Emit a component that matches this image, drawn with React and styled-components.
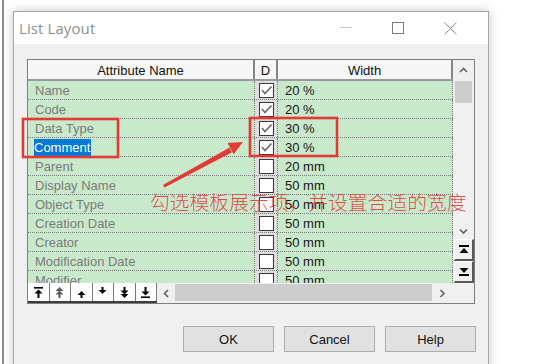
import React from "react";
import styled, { createGlobalStyle } from "styled-components";

const Global = createGlobalStyle`
  html, body { margin: 0; padding: 0; background: #fff; }
  * { box-sizing: border-box; }
`;

const Desktop = styled.div`
  position: relative;
  width: 535px;
  height: 364px;
  overflow: hidden;
  background: #fff;
  display: flex;
  align-items: flex-start;
`;

const ParentEdge = styled.div`
  flex: none;
  width: 2px;
  height: 100%;
  margin-left: 2px;
  background: #8c8c8c;
`;

const Dialog = styled.div`
  flex: none;
  margin-left: 9px;
  margin-top: 11px;
  width: 476px;
  height: 370px;
  border: 1px solid #a6a6a6;
  box-shadow: 0 0 10px rgba(0, 0, 0, 0.22);
  background: #f0f0f0;
  display: flex;
  flex-direction: column;
`;

const TitleBar = styled.div`
  height: 32px;
  background: #fff;
  display: flex;
  align-items: center;
  padding-left: 5px;
`;

const Title = styled.div`
  font-family: "Open Sans", "Noto Sans", sans-serif;
  font-size: 15px;
  color: #8f8f8f;
  letter-spacing: 0.1px;
`;

const Controls = styled.div`
  margin-left: auto;
  margin-right: 12px;
  display: flex;
  height: 100%;
`;

const ControlBtn = styled.div`
  width: 52px;
  height: 100%;
  display: flex;
  align-items: center;
  justify-content: center;
`;

const Body = styled.div`
  flex: 1;
  padding: 15px 13px 0 13px;
  display: flex;
  flex-direction: column;
`;

const Frame = styled.div`
  width: 448px;
  height: 245px;
  border: 1px solid #7d7d7d;
  display: grid;
  grid-template-columns: 425px 21px;
  grid-template-rows: 223px 20px;
  background: #f0f0f0;
`;

const Table = styled.div`
  display: flex;
  flex-direction: column;
  overflow: hidden;
  font-family: "Liberation Sans", Arial, sans-serif;
  font-size: 13px;
`;

const cols = "227px 23px 175px";

const HeaderRow = styled.div`
  flex: none;
  height: 21px;
  display: grid;
  grid-template-columns: ${cols};
  background: #f7f7f7;
  border-bottom: 2px solid #9b9b9b;
`;

const HeaderCell = styled.div`
  border-right: 2px solid #858585;
  text-align: center;
  line-height: 21px;
  height: 19px;
  color: #111;
`;

const Rows = styled.div`
  flex: 1;
  overflow: hidden;
`;

const Row = styled.div`
  height: 19px;
  display: grid;
  grid-template-columns: ${cols};
  background: #c9e9cb;
  border-bottom: 1px dotted #7a7a7a;
`;

const Cell = styled.div`
  border-right: 1px dotted #7a7a7a;
  line-height: 17px;
  padding-top: 1px;
  padding-left: ${(p) => p.$pad ?? 7}px;
  color: ${(p) => p.$color || "#111"};
  white-space: nowrap;
  overflow: hidden;
`;

const CheckCell = styled.div`
  border-right: 1px dotted #7a7a7a;
  background: #dedede;
  display: flex;
  align-items: center;
  justify-content: center;
`;

const Box = styled.div`
  width: 15px;
  height: 15px;
  background: #fff;
  border: 1px solid #3a3a3a;
  display: flex;
  align-items: center;
  justify-content: center;
`;

const Selected = styled.span`
  display: inline-block;
  background: #0078d7;
  color: #fff;
  line-height: 17px;
  padding: 0 1px 0 0;
  margin-left: -1px;
`;

const VScroll = styled.div`
  display: flex;
  flex-direction: column;
  background: #f0f0f0;
`;

const ArrowZone = styled.div`
  flex: none;
  height: ${(p) => p.$h}px;
  display: flex;
  align-items: center;
  justify-content: center;
`;

const VThumb = styled.div`
  flex: none;
  height: 22px;
  margin: 0 2px;
  background: #cdcdcd;
`;

const Spacer = styled.div`
  flex: 1;
`;

const RaisedBtn = styled.div`
  flex: none;
  height: ${(p) => p.$h}px;
  margin-left: 1px;
  background: #f0f0f0;
  border-top: 1px solid #fff;
  border-left: 1px solid #fff;
  border-right: 2px solid #5a5a5a;
  border-bottom: 2px solid #5a5a5a;
  display: flex;
  align-items: center;
  justify-content: center;
`;

const BottomBar = styled.div`
  display: flex;
  background: #f0f0f0;
`;

const NavBar = styled.div`
  flex: none;
  width: 129px;
  display: flex;
  border-bottom: 2px solid #3c3c3c;
`;

const NavBtn = styled.div`
  flex: 1;
  background: #fff;
  border-right: 1px solid #7a7a7a;
  display: flex;
  align-items: center;
  justify-content: center;
`;

const HScroll = styled.div`
  flex: 1;
  display: grid;
  grid-template-columns: 18px 1fr 21px;
`;

const HThumb = styled.div`
  margin: 1px 0 2px;
  background: #cdcdcd;
`;

const Corner = styled.div`
  background: #f0f0f0;
`;

const Footer = styled.div`
  display: flex;
  justify-content: flex-end;
  gap: 10px;
  padding-top: 22px;
  margin-right: -1px;
`;

const Button = styled.div`
  width: 91px;
  height: 26px;
  background: #e1e1e1;
  border: 1px solid #adadad;
  font-family: "Liberation Sans", Arial, sans-serif;
  font-size: 13px;
  color: #111;
  display: flex;
  align-items: center;
  justify-content: center;
`;

const Overlay = styled.svg`
  position: absolute;
  left: 0;
  top: 0;
  pointer-events: none;
`;

const Note = styled.div`
  position: absolute;
  left: 150px;
  top: 190px;
  font-family: "Noto Sans CJK SC", sans-serif;
  font-size: 19.8px;
  font-weight: 300;
  line-height: 24px;
  color: rgba(228, 52, 52, 0.88);
  white-space: nowrap;
  pointer-events: none;
`;

const Chevron = ({ dir }) => {
  const d = {
    up: "M1 5 L4.5 1.5 L8 5",
    down: "M1 1.5 L4.5 5 L8 1.5",
    left: "M5 1 L1.5 4.5 L5 8",
    right: "M1.5 1 L5 4.5 L1.5 8",
  }[dir];
  const vertical = dir === "up" || dir === "down";
  return (
    <svg width={vertical ? 9 : 7} height={vertical ? 7 : 9} viewBox={vertical ? "0 0 9 7" : "0 0 7 9"}>
      <path d={d} fill="none" stroke="#606060" strokeWidth="1.6" />
    </svg>
  );
};

const Check = () => (
  <svg width="13" height="13" viewBox="0 0 13 13">
    <path d="M2 6 L5 9.5 L11.5 2.5" fill="none" stroke="#6a6a6a" strokeWidth="1.6" />
  </svg>
);

const NavIcon = ({ kind }) => {
  const c = kind === "up2" ? "#5e5e5e" : "#000";
  const shapes = {
    top: (
      <>
        <rect x="0" y="0" width="9" height="1.6" fill={c} />
        <polygon points="4.5,2.5 0.5,6.5 8.5,6.5" fill={c} />
        <rect x="3.5" y="6" width="2" height="5" fill={c} />
      </>
    ),
    up2: (
      <>
        <polygon points="4.5,0 0.5,4 8.5,4" fill={c} />
        <polygon points="4.5,3.5 0.5,7.5 8.5,7.5" fill={c} />
        <rect x="3.5" y="7" width="2" height="4" fill={c} />
      </>
    ),
    up: (
      <>
        <polygon points="4.5,4 0.5,8 8.5,8" fill={c} />
        <rect x="3.5" y="7.5" width="2" height="3.5" fill={c} />
      </>
    ),
    down: (
      <>
        <rect x="3.5" y="0" width="2" height="3.5" fill={c} />
        <polygon points="4.5,7 0.5,3 8.5,3" fill={c} />
      </>
    ),
    down2: (
      <>
        <rect x="3.5" y="0" width="2" height="4" fill={c} />
        <polygon points="4.5,7.5 0.5,3.5 8.5,3.5" fill={c} />
        <polygon points="4.5,11 0.5,7 8.5,7" fill={c} />
      </>
    ),
    bottom: (
      <>
        <rect x="3.5" y="0" width="2" height="5" fill={c} />
        <polygon points="4.5,8.5 0.5,4.5 8.5,4.5" fill={c} />
        <rect x="0" y="9.4" width="9" height="1.6" fill={c} />
      </>
    ),
  };
  return (
    <svg width="9" height="11" viewBox="0 0 9 11">
      {shapes[kind]}
    </svg>
  );
};

const EdgeIcon = ({ top }) => (
  <svg width="10" height="9" viewBox="0 0 10 9">
    {top ? (
      <>
        <rect x="0" y="0" width="10" height="2" fill="#000" />
        <polygon points="5,3 0.5,8 9.5,8" fill="#000" />
      </>
    ) : (
      <>
        <polygon points="5,6 0.5,1 9.5,1" fill="#000" />
        <rect x="0" y="7" width="10" height="2" fill="#000" />
      </>
    )}
  </svg>
);

const rows = [
  { name: "Name", on: true, w: "20 %" },
  { name: "Code", on: true, w: "20 %" },
  { name: "Data Type", on: true, w: "30 %" },
  { name: "Comment", on: true, w: "30 %", sel: true },
  { name: "Parent", on: false, w: "20 mm" },
  { name: "Display Name", on: false, w: "50 mm" },
  { name: "Object Type", on: false, w: "50 mm" },
  { name: "Creation Date", on: false, w: "50 mm" },
  { name: "Creator", on: false, w: "50 mm" },
  { name: "Modification Date", on: false, w: "50 mm" },
  { name: "Modifier", on: false, w: "50 mm" },
];

const navKinds = ["top", "up2", "up", "down", "down2", "bottom"];

export default function App() {
  return (
    <>
      <Global />
      <Desktop>
        <ParentEdge />
        <Dialog>
          <TitleBar>
            <Title>List Layout</Title>
            <Controls>
              <ControlBtn>
                <svg width="12" height="2" viewBox="0 0 12 2">
                  <rect width="12" height="1" fill="#c8c8c8" />
                </svg>
              </ControlBtn>
              <ControlBtn>
                <svg width="12" height="12" viewBox="0 0 12 12">
                  <rect x="0.5" y="0.5" width="11" height="11" fill="none" stroke="#7a7a7a" />
                </svg>
              </ControlBtn>
              <ControlBtn>
                <svg width="13" height="13" viewBox="0 0 13 13">
                  <path d="M0.5 0.5 L12.5 12.5 M12.5 0.5 L0.5 12.5" stroke="#8a8a8a" strokeWidth="1" />
                </svg>
              </ControlBtn>
            </Controls>
          </TitleBar>
          <Body>
            <Frame>
              <Table>
                <HeaderRow>
                  <HeaderCell>Attribute Name</HeaderCell>
                  <HeaderCell>D</HeaderCell>
                  <HeaderCell>Width</HeaderCell>
                </HeaderRow>
                <Rows>
                  {rows.map((r) => (
                    <Row key={r.name}>
                      <Cell $color="#7b7b7b">
                        {r.sel ? <Selected>{r.name}</Selected> : r.name}
                      </Cell>
                      <CheckCell>
                        <Box>{r.on && <Check />}</Box>
                      </CheckCell>
                      <Cell $color="#161616">{r.w}</Cell>
                    </Row>
                  ))}
                </Rows>
              </Table>
              <VScroll>
                <ArrowZone $h={21}>
                  <Chevron dir="up" />
                </ArrowZone>
                <VThumb />
                <Spacer />
                <ArrowZone $h={16}>
                  <Chevron dir="down" />
                </ArrowZone>
                <RaisedBtn $h={22}>
                  <EdgeIcon top />
                </RaisedBtn>
                <RaisedBtn $h={22}>
                  <EdgeIcon />
                </RaisedBtn>
              </VScroll>
              <BottomBar>
                <NavBar>
                  {navKinds.map((k) => (
                    <NavBtn key={k}>
                      <NavIcon kind={k} />
                    </NavBtn>
                  ))}
                </NavBar>
                <HScroll>
                  <ArrowZone $h={20}>
                    <Chevron dir="left" />
                  </ArrowZone>
                  <HThumb />
                  <ArrowZone $h={20}>
                    <Chevron dir="right" />
                  </ArrowZone>
                </HScroll>
              </BottomBar>
              <Corner />
            </Frame>
            <Footer>
              <Button>OK</Button>
              <Button>Cancel</Button>
              <Button>Help</Button>
            </Footer>
          </Body>
        </Dialog>
        <Overlay width="535" height="364" viewBox="0 0 535 364">
          <rect x="23" y="119" width="95" height="38" fill="none" stroke="#e53935" strokeWidth="2.6" />
          <rect x="250" y="118" width="87" height="38" fill="none" stroke="#e53935" strokeWidth="2.6" />
          <polygon points="163,185 164.5,187.5 231.6,152.6 229.6,147.4" fill="#e53935" />
          <polygon points="243,142 233.6,154.2 227.6,143.0" fill="#e53935" />
        </Overlay>
        <Note>勾选模板展示项，并设置合适的宽度</Note>
      </Desktop>
    </>
  );
}
